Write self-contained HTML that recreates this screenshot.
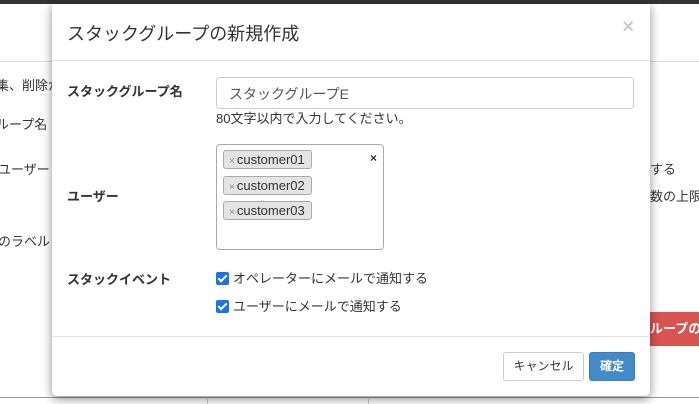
<!DOCTYPE html><html><head><meta charset="utf-8"><style>
body{margin:0;width:699px;height:404px;position:relative;overflow:hidden;background:#fff;font-family:"Liberation Sans","Noto Sans CJK JP",sans-serif;color:#333;font-size:13px}
.top{position:absolute;left:0;top:0;width:699px;height:4px;background:#333}
.bg{position:absolute;font-size:13px;color:#333;white-space:nowrap}
.hr{position:absolute;left:0;width:699px;height:1px;background:#ddd}
.modal{position:absolute;left:52px;top:4px;width:598px;height:392px;background:#fff;border-radius:0 0 5px 5px;box-shadow:0 3px 10px rgba(0,0,0,.45)}
.title{position:absolute;left:15px;top:16px;font-size:18px;color:#333}
.close{position:absolute;right:16px;top:12px;font-size:20px;color:#ccc;font-weight:bold}
.line{position:absolute;left:0;width:598px;height:1px;background:#e5e5e5}
.lab{position:absolute;left:15px;font-weight:bold;font-size:13px}
.inp{position:absolute;left:164px;top:73px;height:32px;border:1px solid #ccc;border-radius:4px;box-sizing:border-box;width:418px;padding:6px 12px;color:#555;font-size:14px}
.tags{position:absolute;left:164px;top:140px;width:168px;height:106px;border:1px solid #aaa;border-radius:4px;box-sizing:border-box}
.tag{position:absolute;left:6px;height:19px;border:1px solid #aaa;border-radius:3px;background:#e4e4e4;box-sizing:border-box;padding:1px 6px 0 5px;font-size:13px;color:#333}
.tag b{font-weight:normal;color:#888;font-size:10px;margin-right:2px}
.cb{position:absolute;left:164px;font-size:13px}
.cb i{display:inline-block;width:13px;height:13px;background:#1a73e8;border-radius:2px;vertical-align:-2px;margin-right:4px;position:relative}
.cb i:after{content:"";position:absolute;left:4px;top:1px;width:3px;height:7px;border:solid #fff;border-width:0 2px 2px 0;transform:rotate(45deg)}
.btn{position:absolute;top:348px;height:29px;border-radius:3px;box-sizing:border-box;font-size:12px;text-align:center;line-height:27px}
</style></head><body>
<div class="top"></div>
<div class="hr" style="top:61px"></div>
<div class="bg" style="left:-4px;top:75px">集、削除か</div>
<div class="bg" style="left:-4px;top:114px">ループ名</div>
<div class="bg" style="left:-2px;top:159px">ユーザー</div>
<div class="bg" style="left:-2px;top:231px">のラベル</div>
<div class="bg" style="left:650px;top:159px">する</div>
<div class="bg" style="left:650px;top:186px">数の上限</div>
<div style="position:absolute;left:640px;top:312px;width:60px;height:34px;background:#d9534f;color:#fff;font-weight:bold;font-size:13px;line-height:34px;padding-left:10px;box-sizing:border-box;white-space:nowrap">ループの</div>
<div class="hr" style="top:397px;background:#999"></div>
<div style="position:absolute;left:207px;top:397px;width:1px;height:7px;background:#ccc"></div>
<div style="position:absolute;left:368px;top:397px;width:1px;height:7px;background:#ccc"></div>
<div class="modal">
<div class="title">スタックグループの新規作成</div>
<div class="close">×</div>
<div class="line" style="top:56px"></div>
<div class="lab" style="top:77px">スタックグループ名</div>
<div class="inp">スタックグループE</div>
<div style="position:absolute;left:164px;top:104px">80文字以内で入力してください。</div>
<div class="lab" style="top:182px">ユーザー</div>
<div class="tags">
<div class="tag" style="top:5px"><b>×</b>customer01</div>
<div class="tag" style="top:31px"><b>×</b>customer02</div>
<div class="tag" style="top:56px"><b>×</b>customer03</div>
<div style="position:absolute;right:6px;top:6px;font-size:12px;font-weight:bold">×</div>
</div>
<div class="lab" style="top:265px">スタックイベント</div>
<div class="cb" style="top:264px"><i></i>オペレーターにメールで通知する</div>
<div class="cb" style="top:292px"><i></i>ユーザーにメールで通知する</div>
<div class="line" style="top:332px"></div>
<div class="btn" style="left:451px;width:81px;border:1px solid #ccc;color:#333">キャンセル</div>
<div class="btn" style="left:537px;width:46px;background:#428bca;border:1px solid #357ebd;color:#fff;font-weight:bold">確定</div>
</div>
</body></html>
